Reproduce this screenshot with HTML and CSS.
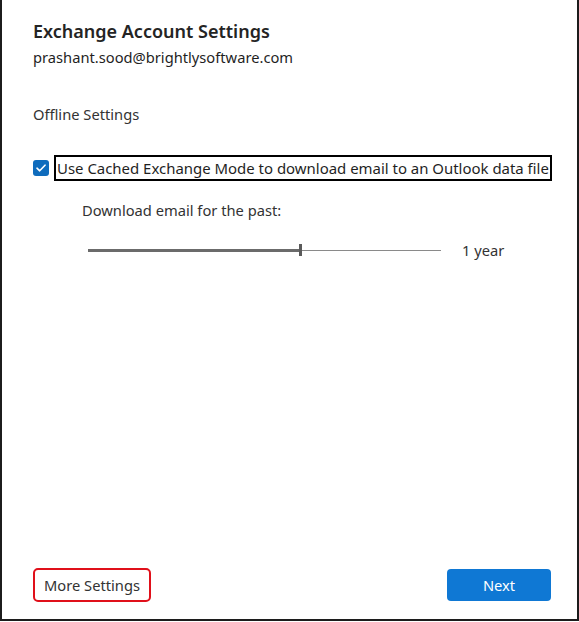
FILE: index.html
```html
<!DOCTYPE html>
<html lang="en">
<head>
    <meta charset="UTF-8">
    <meta name="viewport" content="width=device-width, initial-scale=1.0">
    <title>Exchange Account Settings</title>
    <link rel="stylesheet" href="styles.css">
</head>
<body>

<div class="dialog">
    <!-- Header -->
    <h1 class="dialog-title">Exchange Account Settings</h1>
    <div class="account-email">prashant.sood@brightlysoftware.com</div>

    <!-- Offline Settings -->
    <div class="section-label">Offline Settings</div>

    <label class="cached-mode">
        <span class="checkbox">
            <svg width="10" height="8" viewBox="0 0 10 8">
                <path d="M1 4.2 L3.7 6.8 L9 1.2" fill="none" stroke="white" stroke-width="1.6" stroke-linecap="round" stroke-linejoin="round"/>
            </svg>
        </span>
        <span class="cached-text">Use Cached Exchange Mode to download email to an Outlook data file</span>
    </label>

    <div class="download-range">
        <div class="range-label">Download email for the past:</div>
        <div class="range-row">
            <div class="slider">
                <div class="slider-fill"></div>
                <div class="slider-thumb"></div>
                <div class="slider-rest"></div>
            </div>
            <span class="range-value">1 year</span>
        </div>
    </div>

    <!-- Footer buttons -->
    <div class="dialog-footer">
        <button class="btn btn-more">More Settings</button>
        <button class="btn btn-next">Next</button>
    </div>
</div>

</body>
</html>
```

FILE: styles.css
```css
/* General Styles */
body {
    margin: 0;
    padding: 0;
    background-color: #ffffff;
    font-family: "Noto Sans", "Open Sans", sans-serif;
    color: #1f1f1f;
}

.dialog {
    width: 579px;
    height: 621px;
    box-sizing: border-box;
    border-left: 2px solid #1c1c1c;
    border-right: 2px solid #1c1c1c;
    border-bottom: 2px solid #1c1c1c;
    padding: 17px 26px 17px 31px;
    display: flex;
    flex-direction: column;
}

.dialog-title {
    margin: 0;
    font-size: 18px;
    font-weight: 600;
    line-height: 28px;
    color: #242424;
}

.account-email {
    font-size: 14.7px;
    line-height: 20px;
    margin-top: 2px;
}

.section-label {
    font-size: 14.7px;
    line-height: 20px;
    margin-top: 37px;
    color: #333333;
}

/* Cached mode checkbox */
.cached-mode {
    display: flex;
    align-items: center;
    margin-top: 31px;
}

.checkbox {
    flex-shrink: 0;
    width: 16px;
    height: 16px;
    border-radius: 3px;
    background-color: #0f6cbd;
    display: flex;
    align-items: center;
    justify-content: center;
    margin-right: 5px;
}

.cached-text {
    flex-shrink: 0;
    border: 2px solid #000000;
    padding: 1px 1px;
    font-size: 14.95px;
    line-height: 20px;
    white-space: nowrap;
}

/* Download range */
.download-range {
    padding-left: 49px;
    margin-top: 19px;
}

.range-label {
    font-size: 14.7px;
    line-height: 20px;
    color: #333333;
}

.range-row {
    display: flex;
    align-items: center;
    margin-top: 20px;
    padding-left: 6px;
}

.slider {
    width: 353px;
    height: 12px;
    display: flex;
    align-items: center;
}

.slider-fill {
    width: 211px;
    height: 3px;
    background-color: #6b6b6b;
}

.slider-thumb {
    width: 3px;
    height: 12px;
    background-color: #5a5a5a;
}

.slider-rest {
    flex: 1;
    height: 1px;
    background-color: #8a8a8a;
}

.range-value {
    margin-left: 21px;
    font-size: 14.7px;
    color: #333333;
}

/* Footer */
.dialog-footer {
    margin-top: auto;
    display: flex;
    justify-content: space-between;
    align-items: center;
}

.btn {
    font-family: inherit;
    font-size: 14.7px;
    border-radius: 4px;
    cursor: pointer;
}

.btn-more {
    height: 34px;
    padding: 0 9px;
    background-color: #ffffff;
    color: #333333;
    border: 2px solid #e0101a;
    border-radius: 5px;
}

.btn-next {
    width: 104px;
    height: 32px;
    background-color: #0f78d4;
    color: #ffffff;
    border: none;
}
```
